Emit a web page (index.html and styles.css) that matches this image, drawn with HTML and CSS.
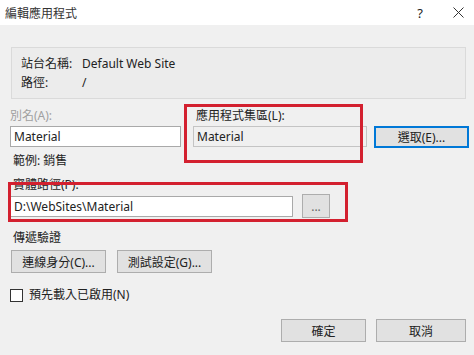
FILE: index.html
```html
<!DOCTYPE html>
<html lang="zh-Hant">
<head>
    <meta charset="UTF-8">
    <title>編輯應用程式</title>
    <link rel="stylesheet" href="styles.css">
</head>
<body>
    <div class="dialog">
        <div class="titlebar">
            <span class="title">編輯應用程式</span>
            <span class="help">?</span>
            <span class="close">
                <svg width="11" height="11" viewBox="0 0 11 11"><path d="M0.5 0.5L10.5 10.5M10.5 0.5L0.5 10.5" stroke="#333" stroke-width="1" fill="none"/></svg>
            </span>
        </div>
        <div class="content">
            <div class="info-box">
                <div class="info-row"><span class="info-label">站台名稱:</span><span>Default Web Site</span></div>
                <div class="info-row"><span class="info-label">路徑:</span><span>/</span></div>
            </div>

            <div class="alias-grid">
                <label class="disabled">別名(A):</label>
                <label class="pool-label">應用程式集區(L):</label>
                <span></span>
                <input class="field" type="text" value="Material">
                <input class="field readonly" type="text" value="Material" readonly>
                <button class="btn btn-focus">選取(E)...</button>
            </div>
            <div class="hint">範例: 銷售</div>

            <label class="path-label">實體路徑(P):</label>
            <div class="path-row">
                <input class="field path-input" type="text" value="D:\WebSites\Material">
                <button class="btn btn-browse">...</button>
            </div>

            <div class="section-label">傳遞驗證</div>
            <div class="auth-row">
                <button class="btn btn-auth">連線身分(C)...</button>
                <button class="btn btn-auth">測試設定(G)...</button>
            </div>

            <label class="check-row"><span class="checkbox"></span>預先載入已啟用(N)</label>

            <div class="footer">
                <button class="btn btn-ok">確定</button>
                <button class="btn btn-cancel">取消</button>
            </div>

            <div class="mark mark-pool"></div>
            <div class="mark mark-path"></div>
        </div>
    </div>
</body>
</html>
```

FILE: styles.css
```css
:root {
    --face: #f0f0f0;
    --btn-face: #e1e1e1;
    --btn-border: #adadad;
    --field-border: #a9a9a9;
    --mark: #d3202f;
}
body {
    margin: 0;
    font-family: "Segoe UI", "Noto Sans", "Noto Sans CJK TC", sans-serif;
    font-size: 12px;
    color: #222;
}
.dialog { width: 474px; height: 355px; background: var(--face); overflow: hidden; }
.titlebar { height: 25px; background: #fff; display: flex; align-items: center; padding-left: 5px; }
.title { flex: 1; color: #333; }
.help { width: 20px; text-align: center; margin-right: 23px; font-size: 13px; }
.close { width: 11px; height: 11px; margin-right: 10px; display: flex; }

.content { position: relative; padding: 22px 8px 0 10px; }
.info-box { margin-left: 1px; background: #ececec; border: 1px solid #dadada; padding: 6px 9px; }
.info-row { display: flex; line-height: 19px; }
.info-label { width: 61px; }

label, .hint, .section-label { display: block; line-height: 16px; }
.disabled { color: #a0a0a0; }
.alias-grid {
    display: grid;
    grid-template-columns: 171px 174px 90px;
    column-gap: 12px;
    row-gap: 2px;
    margin-top: 9px;
}
.alias-grid .btn-focus { margin-left: -5px; }
.pool-label { padding-left: 3px; }
.field {
    height: 21px;
    box-sizing: border-box;
    border: 1px solid var(--field-border);
    background: #fff;
    font: inherit;
    color: #222;
    padding: 0 3px;
    margin: 0;
    width: 100%;
}
.readonly { background: var(--face); border-color: #c4c4c4; }
.btn {
    font: inherit;
    color: #222;
    background: var(--btn-face);
    border: 1px solid var(--btn-border);
    padding: 0;
    margin: 0;
    height: 23px;
}
.btn-focus { border: 2px solid #0078d7; height: 22px; }
.hint { margin-top: 5px; padding-left: 3px; }
.path-label { margin-top: 8px; padding-left: 3px; }
.path-row { display: flex; align-items: center; gap: 9px; margin-top: 1px; }
.path-input { width: 283px; }
.btn-browse { width: 28px; height: 24px; color: #666; }
.section-label { margin-top: 12px; padding-left: 3px; }
.auth-row { display: flex; gap: 11px; margin-top: 4px; padding-left: 1px; }
.btn-auth { width: 95px; }
.check-row { display: flex; align-items: center; margin-top: 14px; }
.checkbox { width: 11px; height: 11px; border: 1px solid #333; background: #fff; margin-right: 6px; }
.footer { display: flex; justify-content: flex-end; gap: 10px; margin-top: 16px; }
.btn-ok { width: 85px; }
.btn-cancel { width: 90px; }

.mark { position: absolute; border: 3px solid var(--mark); box-sizing: border-box; }
.mark-pool { left: 184px; top: 79px; width: 179px; height: 59px; }
.mark-path { left: 8px; top: 157px; width: 340px; height: 40px; }
```
